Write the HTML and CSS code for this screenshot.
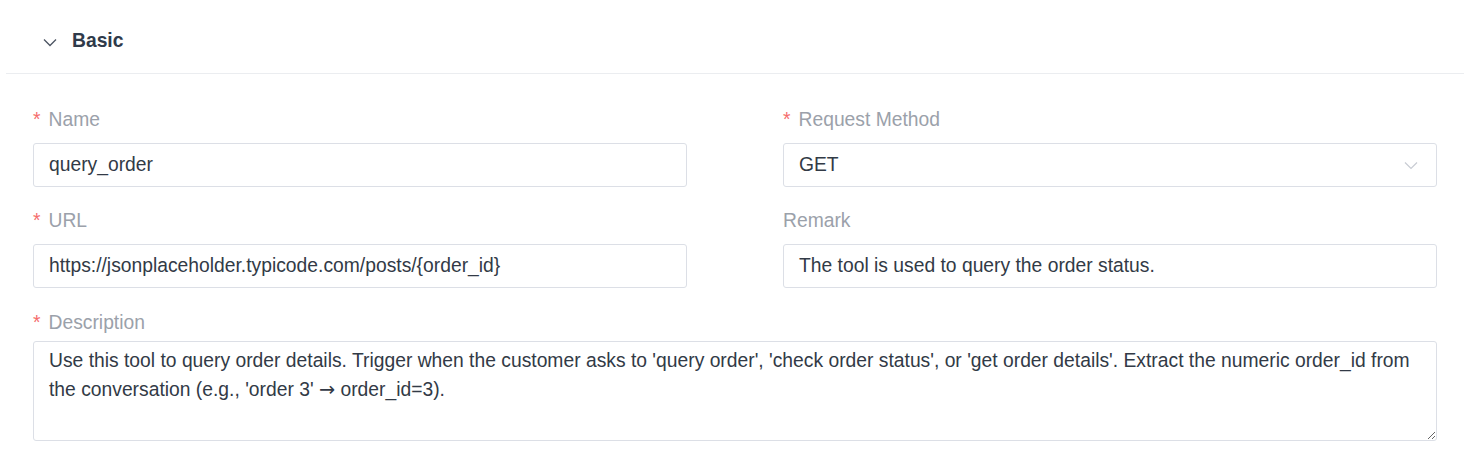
FILE: index.html
```html
<!DOCTYPE html>
<html lang="en">
<head>
<meta charset="utf-8">
<title>Basic</title>
<link rel="stylesheet" href="styles.css">
</head>
<body>
<section class="card">
  <header class="card-header">
    <svg class="collapse-icon" width="14" height="9" viewBox="0 0 14 9"><path d="M1 1.5 L7 7.5 L13 1.5" fill="none" stroke="#4d5563" stroke-width="1.3"/></svg>
    <h2 class="card-title">Basic</h2>
  </header>
  <form class="form">
    <div class="form-item">
      <label class="form-label required">Name</label>
      <div class="input">query_order</div>
    </div>
    <div class="form-item">
      <label class="form-label required">Request Method</label>
      <div class="input select">
        <span>GET</span>
        <svg class="select-arrow" width="14" height="9" viewBox="0 0 14 9"><path d="M1 1.5 L7 7.5 L13 1.5" fill="none" stroke="#c8ccd3" stroke-width="1.2"/></svg>
      </div>
    </div>
    <div class="form-item">
      <label class="form-label required">URL</label>
      <div class="input">https://jsonplaceholder.typicode.com/posts/{order_id}</div>
    </div>
    <div class="form-item">
      <label class="form-label">Remark</label>
      <div class="input">The tool is used to query the order status.</div>
    </div>
    <div class="form-item full">
      <label class="form-label required">Description</label>
      <div class="textarea">Use this tool to query order details. Trigger when the customer asks to 'query order', 'check order status', or 'get order details'. Extract the numeric order_id from the conversation (e.g., 'order 3' <span class="arrow">→</span> order_id=3).</div>
    </div>
  </form>
</section>
</body>
</html>
```

FILE: styles.css
```css
* { box-sizing: border-box; }
body {
  margin: 6px;
  background: #fff;
  font-family: "Liberation Sans", Arial, sans-serif;
  font-size: 19.3px;
  color: #323a46;
}
.card {
  background: #fff;
  box-shadow: 0 0 6px 1px rgba(0, 0, 0, 0.3);
  height: 459px;
}
.card-header {
  height: 68px;
  display: flex;
  align-items: center;
  padding: 3px 0 0 37px;
  border-bottom: 1px solid #ebedf0;
}
.collapse-icon { margin-right: 15px; margin-top: 3px; }
.card-title {
  margin: 0;
  font-size: 19.3px;
  font-weight: bold;
  color: #2f3a4a;
}
.form {
  display: grid;
  grid-template-columns: 1fr 1fr;
  column-gap: 96px;
  padding: 34px 27px 0;
}
.form-item { margin-bottom: 22px; }
.form-item.full { grid-column: 1 / 3; }
.form-label {
  display: block;
  line-height: 24px;
  height: 24px;
  margin-bottom: 11px;
  color: #9ba1aa;
}
.form-label.required::before {
  content: "*";
  color: #f56c6c;
  margin-right: 8px;
}
.form-item.full .form-label { margin-bottom: 6px; margin-top: 1px; }
.input {
  height: 44px;
  border: 1px solid #dcdfe6;
  border-radius: 3px;
  padding: 0 15px;
  display: flex;
  align-items: center;
  color: #323a46;
}
.select { justify-content: space-between; }
.select-arrow { margin-right: 3px; margin-top: 1px; }
.textarea {
  width: 100%;
  height: 100px;
  border: 1px solid #dcdfe6;
  border-radius: 3px;
  padding: 4px 15px;
  line-height: 29px;
  color: #323a46;
  resize: vertical;
  overflow: auto;
}
.arrow {
  font-family: "DejaVu Sans", sans-serif;
  font-size: 19.3px;
  line-height: 1;
}
```
